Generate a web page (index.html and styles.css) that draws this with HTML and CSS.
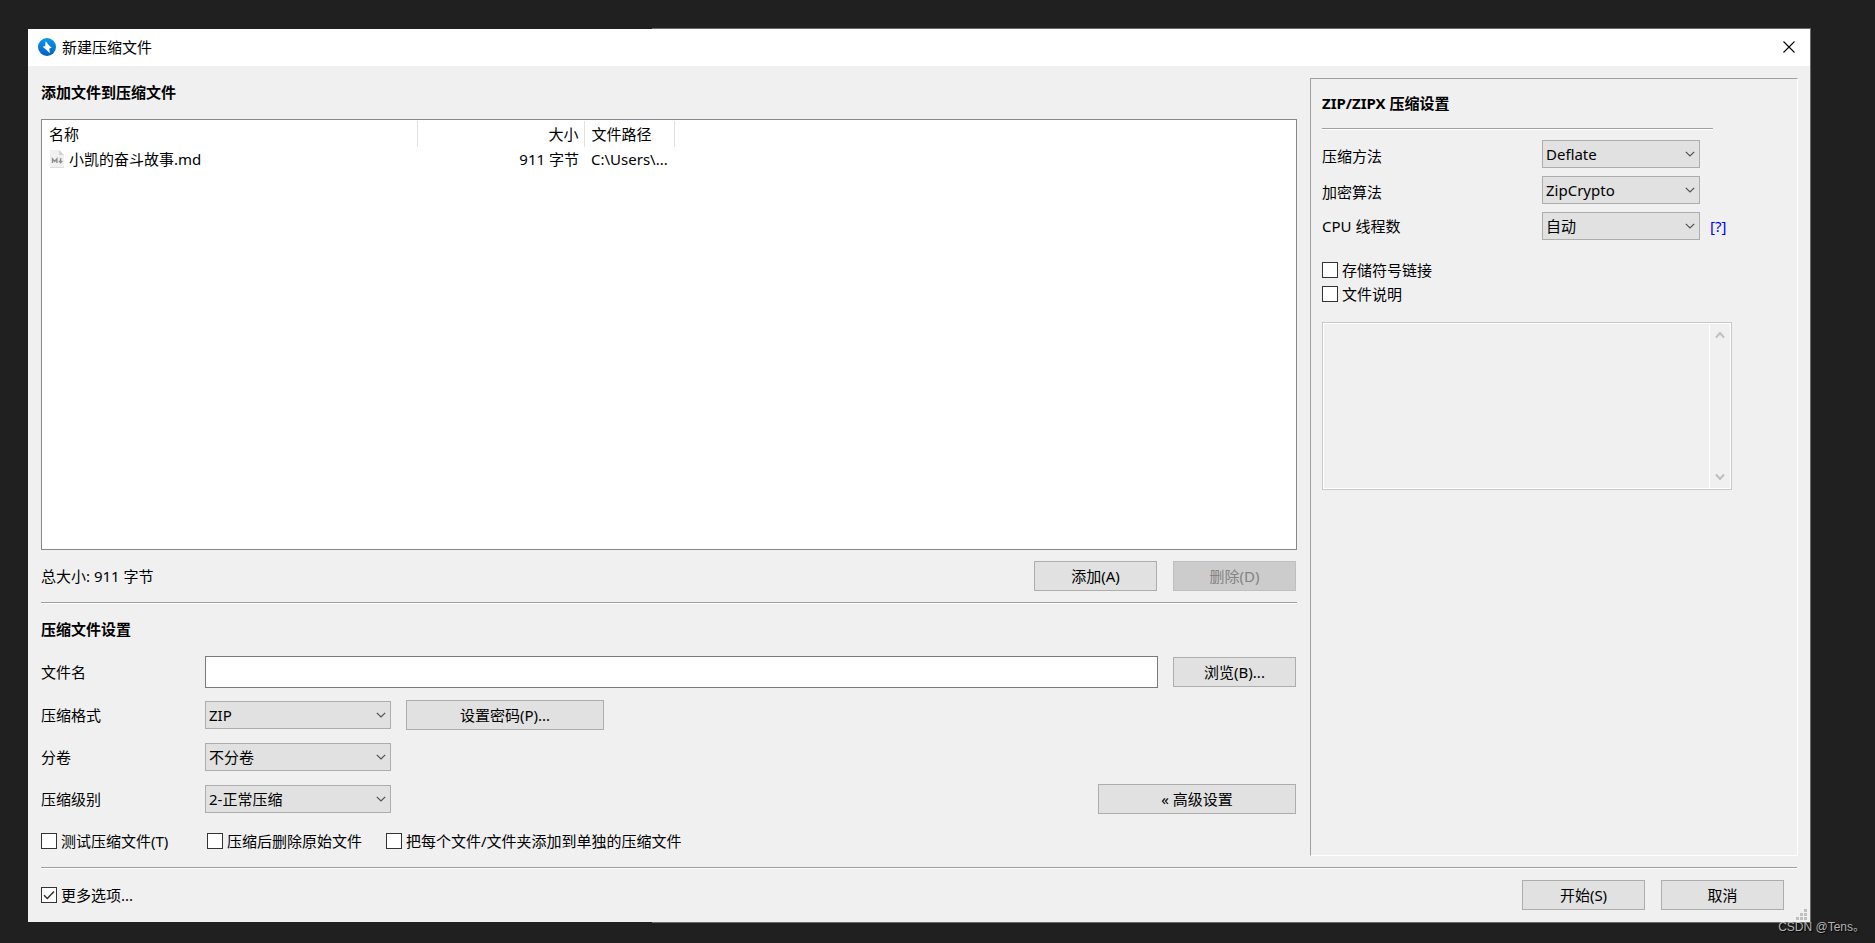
FILE: index.html
```html
<!DOCTYPE html>
<html lang="zh-CN">
<head>
<meta charset="utf-8">
<title>新建压缩文件</title>
<link rel="stylesheet" href="styles.css">
</head>
<body>
<div class="frame">
  <main class="window">
    <header class="titlebar">
      <svg class="app-icon" viewBox="0 0 18 18" aria-hidden="true">
        <defs><linearGradient id="blue" x1="0" y1="0" x2="0" y2="1"><stop offset="0" stop-color="#0a98e4"/><stop offset="1" stop-color="#0560c8"/></linearGradient></defs>
        <circle cx="9" cy="9" r="9" fill="url(#blue)"/>
        <path d="M7.6 3 L10.9 7.2 L13.8 9.8 L11.3 10.4 L11.8 15.2 L8 11.6 L4.6 8.8 L7.2 8 Z" fill="#fff"/>
      </svg>
      <h1 class="title">新建压缩文件</h1>
      <button class="close" type="button" aria-label="关闭">
        <svg viewBox="0 0 12 12" width="12" height="12"><path d="M.5 .5 L11.5 11.5 M11.5 .5 L.5 11.5" stroke="#000" stroke-width="1.1" fill="none"/></svg>
      </button>
    </header>

    <div class="content">
      <section class="left">
        <h2 class="heading">添加文件到压缩文件</h2>
        <div class="file-list">
          <table class="files">
            <thead>
              <tr><th class="col-name">名称</th><th class="col-size">大小</th><th class="col-path">文件路径</th></tr>
            </thead>
            <tbody>
              <tr>
                <td><span class="file"><svg class="file-icon" viewBox="0 0 14 18" aria-hidden="true"><path d="M0 0 H9 L14 5 V18 H0 Z" fill="#f0f0f0"/><path d="M9 0 V5 H14 Z" fill="#d2d2d2"/><path d="M0 17.5 H14" stroke="#dedede"/><path d="M2.5 13 V8.8 L4.7 11.4 L6.9 8.8 V13" fill="none" stroke="#8e8e8e" stroke-width="1.4"/><path d="M10.6 8 V12.5 M8.9 10.9 L10.6 12.8 L12.3 10.9" fill="none" stroke="#8e8e8e" stroke-width="1.4"/></svg>小凯的奋斗故事.md</span></td>
                <td class="col-size">911 字节</td>
                <td>C:\Users\...</td>
              </tr>
            </tbody>
          </table>
        </div>
        <div class="toolbar">
          <span class="grow">总大小: 911 字节</span>
          <button class="btn" type="button">添加(A)</button>
          <button class="btn" type="button" disabled>删除(D)</button>
        </div>
        <hr class="rule">
        <h2 class="heading">压缩文件设置</h2>
        <div class="form">
          <div class="row">
            <label class="label" for="filename">文件名</label>
            <input class="text" id="filename" type="text">
            <button class="btn" type="button">浏览(B)...</button>
          </div>
          <div class="row">
            <label class="label" for="format">压缩格式</label>
            <span class="select"><select id="format"><option>ZIP</option></select><svg viewBox="0 0 10 6"><path d="M.8 .8 L5 5 L9.2 .8"/></svg></span>
            <button class="btn btn-wide" type="button">设置密码(P)...</button>
          </div>
          <div class="row">
            <label class="label" for="volume">分卷</label>
            <span class="select"><select id="volume"><option>不分卷</option></select><svg viewBox="0 0 10 6"><path d="M.8 .8 L5 5 L9.2 .8"/></svg></span>
          </div>
          <div class="row">
            <label class="label" for="level">压缩级别</label>
            <span class="select"><select id="level"><option>2-正常压缩</option></select><svg viewBox="0 0 10 6"><path d="M.8 .8 L5 5 L9.2 .8"/></svg></span>
            <button class="btn btn-wide push" type="button">« 高级设置</button>
          </div>
        </div>
        <div class="checks">
          <label class="check check-first"><input type="checkbox">测试压缩文件(T)</label>
          <label class="check"><input type="checkbox">压缩后删除原始文件</label>
          <label class="check"><input type="checkbox">把每个文件/文件夹添加到单独的压缩文件</label>
        </div>
      </section>

      <section class="panel">
        <h2 class="heading">ZIP/ZIPX 压缩设置</h2>
        <hr class="rule">
        <div class="options">
          <label class="low" for="method">压缩方法</label>
          <span class="select"><select id="method"><option>Deflate</option></select><svg viewBox="0 0 10 6"><path d="M.8 .8 L5 5 L9.2 .8"/></svg></span>
          <label class="low" for="cipher">加密算法</label>
          <span class="select"><select id="cipher"><option>ZipCrypto</option></select><svg viewBox="0 0 10 6"><path d="M.8 .8 L5 5 L9.2 .8"/></svg></span>
          <label for="threads">CPU 线程数</label>
          <span class="select"><select id="threads"><option>自动</option></select><svg viewBox="0 0 10 6"><path d="M.8 .8 L5 5 L9.2 .8"/></svg></span>
          <a class="help" href="#">[?]</a>
        </div>
        <div class="panel-checks">
          <label class="check"><input type="checkbox">存储符号链接</label>
          <label class="check"><input type="checkbox">文件说明</label>
        </div>
        <div class="comment">
          <textarea aria-label="文件说明" disabled></textarea>
          <div class="scroll">
            <svg viewBox="0 0 10 8"><path d="M1 6.5 L5 2 L9 6.5"/></svg>
            <svg viewBox="0 0 10 8"><path d="M1 1.5 L5 6 L9 1.5"/></svg>
          </div>
        </div>
      </section>
    </div>

    <footer class="footer">
      <hr class="rule">
      <div class="actions">
        <label class="check grow"><input type="checkbox" checked><svg class="tick" viewBox="0 0 16 16"><path d="M3 8.2 L6.3 11.5 L13 4.5"/></svg>更多选项...</label>
        <button class="btn" type="button">开始(S)</button>
        <button class="btn" type="button">取消</button>
      </div>
      <svg class="grip" viewBox="0 0 11 11" aria-hidden="true"><path d="M8 0h3v3h-3z M4 4h3v3h-3z M8 4h3v3h-3z M0 8h3v3h-3z M4 8h3v3h-3z M8 8h3v3h-3z" fill="#bfbfbf"/></svg>
    </footer>
  </main>
</div>
<div class="watermark">CSDN @Tens。</div>
</body>
</html>
```

FILE: styles.css
```css
* { box-sizing: border-box; }

body {
  margin: 0;
  min-height: 100vh;
  display: flex;
  padding: 28px 64px 20px 28px;
  background: #202020;
  color: #000;
  font: 15px/20px "Noto Sans", "Noto Sans CJK SC", sans-serif;
}

button, input, select, textarea { font: inherit; color: inherit; margin: 0; }
h1, h2 { margin: 0; font-size: 15px; line-height: 20px; }

.frame {
  flex: 1;
  display: flex;
  padding: 1px 1px 1px 0;
  background: linear-gradient(90deg, #202020 35%, #6a6a6a 35%);
}
.window {
  flex: 1;
  display: flex;
  flex-direction: column;
  background: #f0f0f0;
}

.titlebar {
  display: flex;
  align-items: center;
  height: 37px;
  padding: 0 9px 1px 10px;
  background: #fff;
}
.app-icon { width: 18px; height: 18px; margin-right: 6px; }
.title { flex: 1; font-weight: 400; }
.close { display: flex; padding: 6px; border: 0; background: none; }

.content {
  flex: 1;
  display: flex;
  gap: 13px;
  padding: 0 12px 0 13px;
}
.left { flex: 1; display: flex; flex-direction: column; padding: 16px 0 16px; }
.heading { font-weight: 700; }

.file-list {
  flex: 1;
  margin-top: 17px;
  padding-top: 1px;
  border: 1px solid #828790;
  background: #fff;
}
.files { border-collapse: collapse; table-layout: fixed; width: 632px; }
.files th, .files td { height: 26px; padding: 0 5px 0 7px; text-align: left; font-weight: 400; }
.files th { border-right: 1px solid #e0e0e0; }
.files td { height: 24px; }
.files .col-name { width: 375px; }
.files .col-path { width: 90px; }
.files .col-size { width: 167px; text-align: right; }
.file { display: flex; align-items: center; gap: 5px; }
.file-icon { width: 14px; height: 18px; margin-left: 1px; }

.toolbar { display: flex; align-items: center; gap: 16px; margin: 11px 1px 11px 0; }
.grow { flex: 1; }

.btn {
  width: 123px;
  height: 30px;
  padding: 0 0 1px;
  border: 1px solid #adadad;
  background: #e1e1e1;
}
.btn:disabled { border-color: #bfbfbf; background: #ccc; color: #838383; }
.btn-wide { width: 198px; }
.push { margin-left: auto; }

.rule {
  width: 100%;
  height: 2px;
  margin: 0;
  border: 0;
  border-top: 1px solid #a0a0a0;
  background: #fff;
}
.left .rule { margin-bottom: 15px; }

.form { display: flex; flex-direction: column; gap: 12px; margin: 17px 1px 17px 0; }
.row { display: flex; align-items: center; gap: 15px; min-height: 30px; }
.label { width: 149px; }
.text { flex: 1; height: 32px; padding: 0 4px; border: 1px solid #7a7a7a; background: #fff; }

.select { display: grid; align-items: center; width: 186px; }
.select select {
  grid-area: 1 / 1;
  width: 100%;
  height: 28px;
  padding: 0 20px 0 3px;
  border: 1px solid #adadad;
  border-radius: 0;
  background: #e1e1e1;
  appearance: none;
}
.select svg {
  grid-area: 1 / 1;
  justify-self: end;
  width: 10px;
  height: 6px;
  margin-right: 5px;
  fill: none;
  stroke: #505050;
  stroke-width: 1.2;
  pointer-events: none;
}

.checks { display: flex; gap: 24px; }
.check { display: flex; align-items: center; gap: 4px; }
.check-first { width: 142px; }
.check input {
  width: 16px;
  height: 16px;
  border: 1px solid #333;
  background: #fff;
  appearance: none;
}
.tick { width: 16px; height: 16px; margin-left: -20px; fill: none; stroke: #333; stroke-width: 1.5; }

.panel {
  width: 488px;
  margin: 12px 0 11px;
  padding: 14px 11px;
  border: 1px solid;
  border-color: #a0a0a0 #fff #fff #a0a0a0;
}
.panel .rule { width: 391px; margin: 15px 0 10px; }
.options {
  display: grid;
  grid-template-columns: 220px 158px auto;
  align-items: center;
  row-gap: 8px;
}
.options label { grid-column: 1; }
.options .low { padding-top: 4px; }
.options .select { width: 158px; }
.help { margin-left: 10px; color: #00f; text-decoration: none; }
.panel-checks { display: flex; flex-direction: column; gap: 4px; margin-top: 20px; }
.comment {
  display: flex;
  width: 410px;
  height: 168px;
  margin-top: 18px;
  padding: 1px;
  border: 1px solid #c8c8c8;
  background: #fff;
}
.comment textarea { flex: 1; border: 0; background: #f0f0f0; resize: none; }
.scroll {
  display: flex;
  flex-direction: column;
  justify-content: space-between;
  align-items: center;
  width: 20px;
  margin-left: 1px;
  padding: 7px 0;
  background: #f0f0f0;
}
.scroll svg { width: 10px; height: 8px; fill: none; stroke: #bfbfbf; stroke-width: 2; }

.footer { position: relative; padding: 0 13px 12px; }
.actions { display: flex; align-items: center; gap: 16px; padding: 11px 13px 0 0; }
.grip { position: absolute; right: 3px; bottom: 2px; width: 11px; height: 11px; }

.watermark {
  position: absolute;
  right: 10px;
  bottom: 6px;
  color: #b4b4b4;
  font: 12px/20px "Liberation Sans", "Noto Sans CJK SC", sans-serif;
  text-shadow: 1px 1px 1px #000;
}
```
